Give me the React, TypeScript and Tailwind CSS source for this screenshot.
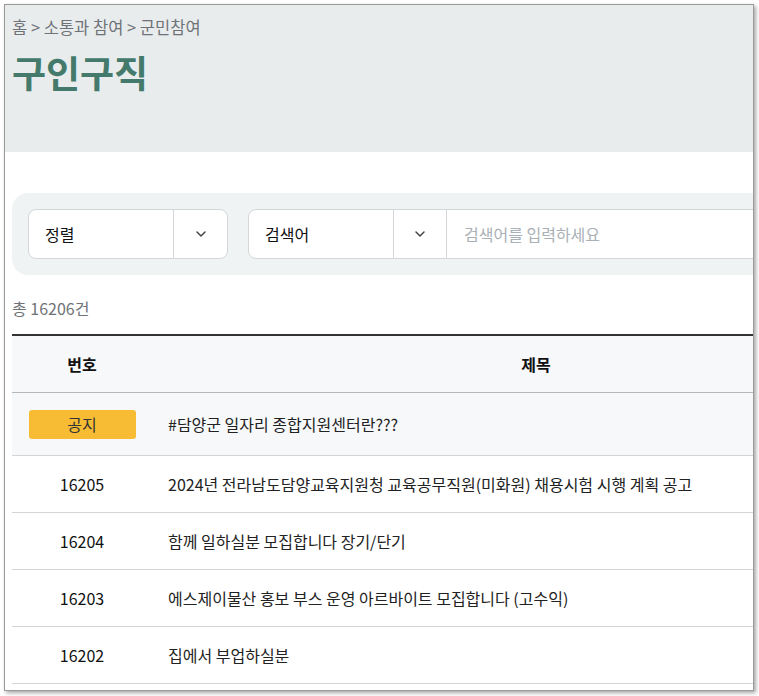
import { ChevronDown } from 'lucide-react'

const rows = [
  { no: '16205', title: '2024년 전라남도담양교육지원청 교육공무직원(미화원) 채용시험 시행 계획 공고' },
  { no: '16204', title: '함께 일하실분 모집합니다 장기/단기' },
  { no: '16203', title: '에스제이물산 홍보 부스 운영 아르바이트 모집합니다 (고수익)' },
  { no: '16202', title: '집에서 부업하실분' },
]

function Chevron() {
  return <ChevronDown size={16} strokeWidth={2.2} className="text-[#444]" />
}

export default function App() {
  return (
    <div
      className="min-h-[696px] bg-white pl-[4px] pt-[4px]"
      style={{ fontFamily: '"Noto Sans CJK KR", "Noto Sans", sans-serif' }}
    >
      <div className="w-[750px] h-[687px] overflow-hidden border border-[#9a9a9a] bg-white shadow-[2px_2px_4px_rgba(0,0,0,0.35)]">
        {/* header */}
        <div className="h-[147px] bg-[#e9eced] px-[7px] pt-[11px]">
          <div className="text-[16.5px] leading-[22px] text-[#6f7377]">홈 &gt; 소통과 참여 &gt; 군민참여</div>
          <h1 className="mt-[9px] text-[37px] leading-[50px] font-bold text-[#447a6b]">구인구직</h1>
        </div>

        <div className="px-[7px] pt-[41px]">
          {/* search */}
          <div className="flex w-[1000px] gap-[20px] rounded-l-[16px] bg-[#f0f3f4] p-[16px]">
            <div className="flex h-[50px] w-[200px] rounded-[8px] border border-[#d3d7da] bg-white">
              <div className="flex w-[145px] items-center border-r border-[#d3d7da] pl-[16px] text-[16px] text-[#111]">정렬</div>
              <div className="flex flex-1 items-center justify-center"><Chevron /></div>
            </div>
            <div className="flex h-[50px] flex-1 rounded-[8px] border border-[#d3d7da] bg-white">
              <div className="flex w-[145px] items-center border-r border-[#d3d7da] pl-[16px] text-[16px] text-[#111]">검색어</div>
              <div className="flex w-[53px] items-center justify-center border-r border-[#d3d7da]"><Chevron /></div>
              <div className="flex flex-1 items-center pl-[17px] text-[16px] text-[#a9b0b6]">검색어를 입력하세요</div>
            </div>
          </div>

          <div className="mt-[22px] text-[16px] leading-[22px] text-[#6f7377]">총 16206건</div>

          {/* table */}
          <div className="mt-[15px] w-[1100px] border-t-2 border-[#333]">
            <div className="flex h-[57px] items-center border-b border-[#b5b8bb] bg-[#f7f8fa] text-[16px] font-bold text-[#111]">
              <div className="w-[140px] text-center">번호</div>
              <div className="w-[768px] text-center">제목</div>
            </div>
            <div className="flex h-[63px] items-center border-b border-[#d3d5d7] bg-[#f7f8fa] text-[16px] text-[#222]">
              <div className="flex w-[140px] justify-center">
                <span className="flex h-[29px] w-[107px] items-center justify-center rounded-[3px] bg-[#f7bc33] text-[16px] text-[#333]">공지</span>
              </div>
              <div className="pl-[16px]">#담양군 일자리 종합지원센터란???</div>
            </div>
            {rows.map((r) => (
              <div key={r.no} className="flex h-[57px] items-center border-b border-[#d3d5d7] text-[16px] text-[#222]">
                <div className="w-[140px] text-center text-[#111]">{r.no}</div>
                <div className="pl-[16px]">{r.title}</div>
              </div>
            ))}
          </div>
        </div>
      </div>
    </div>
  )
}
